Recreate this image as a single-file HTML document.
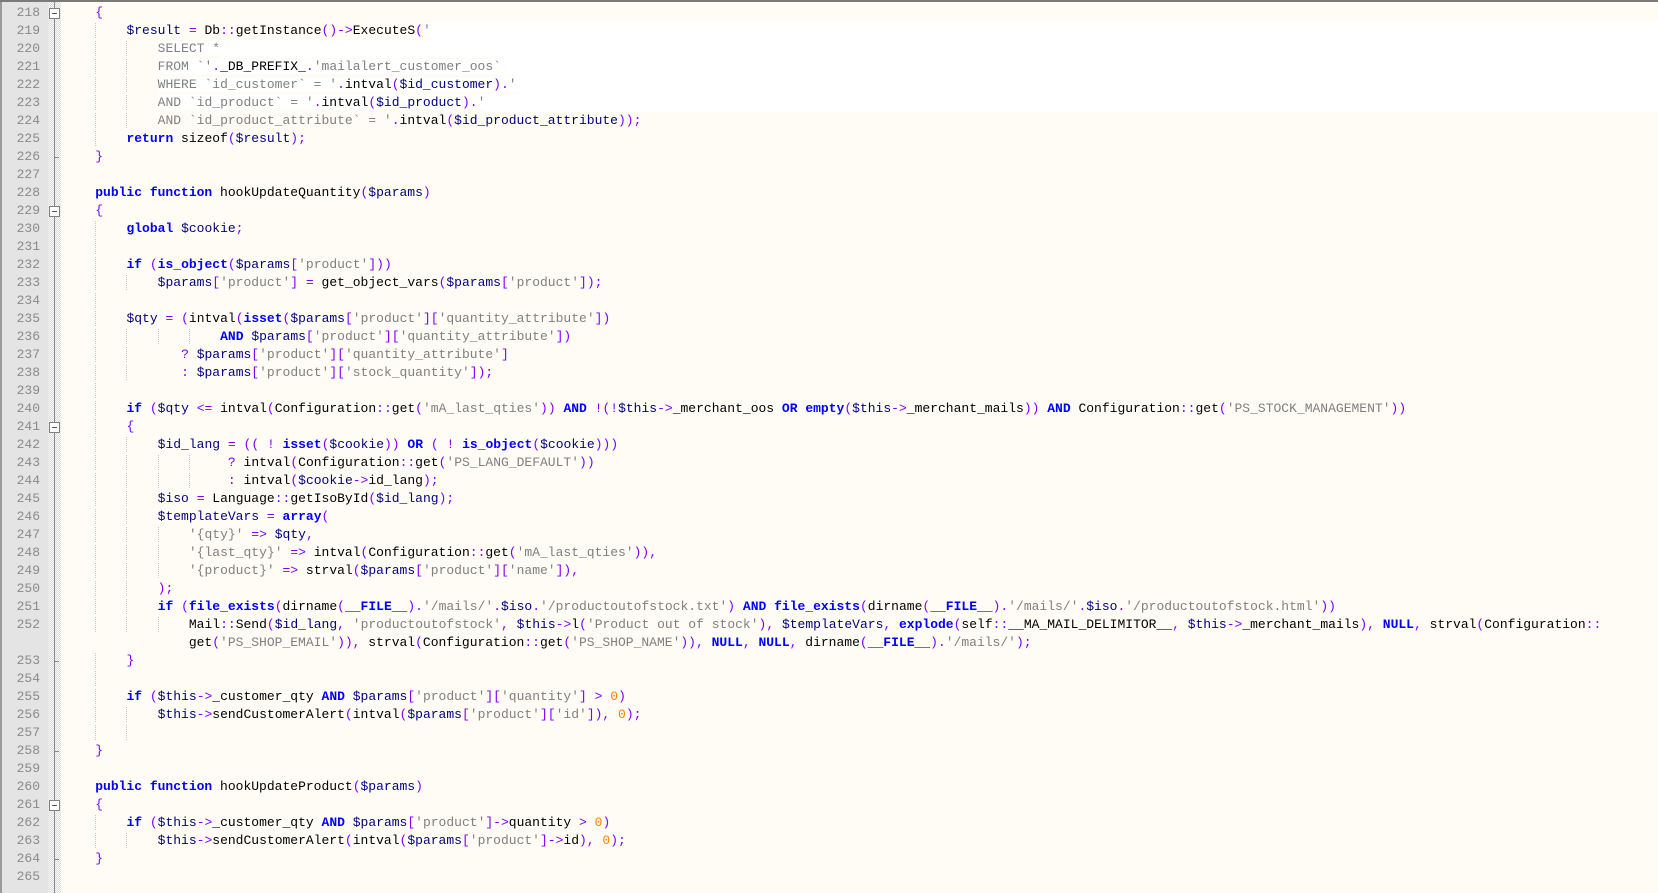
<!DOCTYPE html>
<html><head><meta charset="utf-8"><style>
html,body{margin:0;padding:0;width:1658px;height:891px;overflow:hidden;background:#fefcf4}
#ed{position:absolute;left:0;top:0;width:1658px;height:891px;background:#fefcf4;border-top:2px solid #7a7a7a;box-sizing:border-box}
#gut{position:absolute;left:0;top:0;width:48px;height:891px;background:#e4e4e4;border-left:2px solid #9a9a9a;box-sizing:border-box}
#fold{position:absolute;left:48px;top:0;width:13px;height:891px;background:repeating-conic-gradient(#dcdcdc 0 25%,#f8f8f8 0 50%) 0 0/2px 2px}
#fline{position:absolute;left:54px;top:0;width:1px;height:891px;background:#8a8a8a}
.box{position:absolute;left:49px;width:9px;height:9px;border:1px solid #808080;background:#fff;box-sizing:content-box}
.box:after{content:"";position:absolute;left:2px;top:4px;width:5px;height:1px;background:#555}
.tick{position:absolute;left:54px;width:5px;height:1px;background:#8a8a8a}
#rows{position:absolute;left:0;top:2px;width:1658px}
.r{position:relative;height:18px;white-space:pre;font:13px/18px "Liberation Mono",monospace;color:#000;overflow:hidden}
.ln{position:absolute;left:0;width:40px;text-align:right;color:#8a8a8a;font-size:13px}
.c{position:absolute;left:64px;top:0}
.k{color:#0000ff;font-weight:bold}
.v{color:#000080}
.o{color:#8000ff}
.s{color:#808080}
.n{color:#ff8000}
i{font-style:normal;background:repeating-linear-gradient(to bottom,#c8c8c8 0 1px,transparent 1px 2px) 0 0/1px 100% no-repeat}
.w{background:#fff}
.eol{display:inline-block;width:1700px;height:18px;background:#fff;vertical-align:top}
</style></head><body>
<div id="ed">
<div id="gut"></div>
<div id="fold"></div>
<div id="fline"></div>
<div class="box" style="top:6px"></div>
<div class="tick" style="top:155px"></div>
<div class="box" style="top:204px"></div>
<div class="box" style="top:420px"></div>
<div class="tick" style="top:659px"></div>
<div class="tick" style="top:749px"></div>
<div class="box" style="top:798px"></div>
<div class="tick" style="top:857px"></div>
<div id="rows">
<div class="r"><span class="ln">218</span><span class="c">    <span class="o">{</span></span></div>
<div class="r"><span class="ln">219</span><span class="c">    <i>    </i><span class="v">$result</span> <span class="o">=</span> Db<span class="o">::</span>getInstance<span class="o">()-&gt;</span>ExecuteS<span class="o">(</span><span class="s w">'</span><span class="eol"></span></span></div>
<div class="r"><span class="ln">220</span><span class="c">    <i>    </i><i>    </i><span class="s w">SELECT *</span><span class="eol"></span></span></div>
<div class="r"><span class="ln">221</span><span class="c">    <i>    </i><i>    </i><span class="s w">FROM `'</span><span class="o w">.</span><span class="w">_DB_PREFIX_</span><span class="o w">.</span><span class="s w">'mailalert_customer_oos`</span><span class="eol"></span></span></div>
<div class="r"><span class="ln">222</span><span class="c">    <i>    </i><i>    </i><span class="s w">WHERE `id_customer` = '</span><span class="o w">.</span><span class="w">intval</span><span class="o w">(</span><span class="v w">$id_customer</span><span class="o w">).</span><span class="s w">'</span><span class="eol"></span></span></div>
<div class="r"><span class="ln">223</span><span class="c">    <i>    </i><i>    </i><span class="s w">AND `id_product` = '</span><span class="o w">.</span><span class="w">intval</span><span class="o w">(</span><span class="v w">$id_product</span><span class="o w">).</span><span class="s w">'</span><span class="eol"></span></span></div>
<div class="r"><span class="ln">224</span><span class="c">    <i>    </i><i>    </i><span class="s">AND `id_product_attribute` = '</span><span class="o">.</span>intval<span class="o">(</span><span class="v">$id_product_attribute</span><span class="o">));</span></span></div>
<div class="r"><span class="ln">225</span><span class="c">    <i>    </i><span class="k">return</span> sizeof<span class="o">(</span><span class="v">$result</span><span class="o">);</span></span></div>
<div class="r"><span class="ln">226</span><span class="c">    <span class="o">}</span></span></div>
<div class="r"><span class="ln">227</span><span class="c"></span></div>
<div class="r"><span class="ln">228</span><span class="c">    <span class="k">public function</span> hookUpdateQuantity<span class="o">(</span><span class="v">$params</span><span class="o">)</span></span></div>
<div class="r"><span class="ln">229</span><span class="c">    <span class="o">{</span></span></div>
<div class="r"><span class="ln">230</span><span class="c">    <i>    </i><span class="k">global</span> <span class="v">$cookie</span><span class="o">;</span></span></div>
<div class="r"><span class="ln">231</span><span class="c">    <i>    </i></span></div>
<div class="r"><span class="ln">232</span><span class="c">    <i>    </i><span class="k">if</span> <span class="o">(</span><span class="k">is_object</span><span class="o">(</span><span class="v">$params</span><span class="o">[</span><span class="s">'product'</span><span class="o">]))</span></span></div>
<div class="r"><span class="ln">233</span><span class="c">    <i>    </i><i>    </i><span class="v">$params</span><span class="o">[</span><span class="s">'product'</span><span class="o">]</span> <span class="o">=</span> get_object_vars<span class="o">(</span><span class="v">$params</span><span class="o">[</span><span class="s">'product'</span><span class="o">]);</span></span></div>
<div class="r"><span class="ln">234</span><span class="c">    <i>    </i></span></div>
<div class="r"><span class="ln">235</span><span class="c">    <i>    </i><span class="v">$qty</span> <span class="o">=</span> <span class="o">(</span>intval<span class="o">(</span><span class="k">isset</span><span class="o">(</span><span class="v">$params</span><span class="o">[</span><span class="s">'product'</span><span class="o">][</span><span class="s">'quantity_attribute'</span><span class="o">])</span></span></div>
<div class="r"><span class="ln">236</span><span class="c">    <i>    </i><i>    </i><i>    </i><i>    </i><span class="k">AND</span> <span class="v">$params</span><span class="o">[</span><span class="s">'product'</span><span class="o">][</span><span class="s">'quantity_attribute'</span><span class="o">])</span></span></div>
<div class="r"><span class="ln">237</span><span class="c">    <i>    </i><i>    </i>   <span class="o">?</span> <span class="v">$params</span><span class="o">[</span><span class="s">'product'</span><span class="o">][</span><span class="s">'quantity_attribute'</span><span class="o">]</span></span></div>
<div class="r"><span class="ln">238</span><span class="c">    <i>    </i><i>    </i>   <span class="o">:</span> <span class="v">$params</span><span class="o">[</span><span class="s">'product'</span><span class="o">][</span><span class="s">'stock_quantity'</span><span class="o">]);</span></span></div>
<div class="r"><span class="ln">239</span><span class="c">    <i>    </i></span></div>
<div class="r"><span class="ln">240</span><span class="c">    <i>    </i><span class="k">if</span> <span class="o">(</span><span class="v">$qty</span> <span class="o">&lt;=</span> intval<span class="o">(</span>Configuration<span class="o">::</span>get<span class="o">(</span><span class="s">'mA_last_qties'</span><span class="o">))</span> <span class="k">AND</span> <span class="o">!(!</span><span class="v">$this</span><span class="o">-&gt;</span>_merchant_oos <span class="k">OR</span> <span class="k">empty</span><span class="o">(</span><span class="v">$this</span><span class="o">-&gt;</span>_merchant_mails<span class="o">))</span> <span class="k">AND</span> Configuration<span class="o">::</span>get<span class="o">(</span><span class="s">'PS_STOCK_MANAGEMENT'</span><span class="o">))</span></span></div>
<div class="r"><span class="ln">241</span><span class="c">    <i>    </i><span class="o">{</span></span></div>
<div class="r"><span class="ln">242</span><span class="c">    <i>    </i><i>    </i><span class="v">$id_lang</span> <span class="o">=</span> <span class="o">((</span> <span class="o">!</span> <span class="k">isset</span><span class="o">(</span><span class="v">$cookie</span><span class="o">))</span> <span class="k">OR</span> <span class="o">(</span> <span class="o">!</span> <span class="k">is_object</span><span class="o">(</span><span class="v">$cookie</span><span class="o">)))</span></span></div>
<div class="r"><span class="ln">243</span><span class="c">    <i>    </i><i>    </i><i>    </i><i>    </i> <span class="o">?</span> intval<span class="o">(</span>Configuration<span class="o">::</span>get<span class="o">(</span><span class="s">'PS_LANG_DEFAULT'</span><span class="o">))</span></span></div>
<div class="r"><span class="ln">244</span><span class="c">    <i>    </i><i>    </i><i>    </i><i>    </i> <span class="o">:</span> intval<span class="o">(</span><span class="v">$cookie</span><span class="o">-&gt;</span>id_lang<span class="o">);</span></span></div>
<div class="r"><span class="ln">245</span><span class="c">    <i>    </i><i>    </i><span class="v">$iso</span> <span class="o">=</span> Language<span class="o">::</span>getIsoById<span class="o">(</span><span class="v">$id_lang</span><span class="o">);</span></span></div>
<div class="r"><span class="ln">246</span><span class="c">    <i>    </i><i>    </i><span class="v">$templateVars</span> <span class="o">=</span> <span class="k">array</span><span class="o">(</span></span></div>
<div class="r"><span class="ln">247</span><span class="c">    <i>    </i><i>    </i><i>    </i><span class="s">'{qty}'</span> <span class="o">=&gt;</span> <span class="v">$qty</span><span class="o">,</span></span></div>
<div class="r"><span class="ln">248</span><span class="c">    <i>    </i><i>    </i><i>    </i><span class="s">'{last_qty}'</span> <span class="o">=&gt;</span> intval<span class="o">(</span>Configuration<span class="o">::</span>get<span class="o">(</span><span class="s">'mA_last_qties'</span><span class="o">)),</span></span></div>
<div class="r"><span class="ln">249</span><span class="c">    <i>    </i><i>    </i><i>    </i><span class="s">'{product}'</span> <span class="o">=&gt;</span> strval<span class="o">(</span><span class="v">$params</span><span class="o">[</span><span class="s">'product'</span><span class="o">][</span><span class="s">'name'</span><span class="o">]),</span></span></div>
<div class="r"><span class="ln">250</span><span class="c">    <i>    </i><i>    </i><span class="o">);</span></span></div>
<div class="r"><span class="ln">251</span><span class="c">    <i>    </i><i>    </i><span class="k">if</span> <span class="o">(</span><span class="k">file_exists</span><span class="o">(</span>dirname<span class="o">(</span><span class="k">__FILE__</span><span class="o">).</span><span class="s">'/mails/'</span><span class="o">.</span><span class="v">$iso</span><span class="o">.</span><span class="s">'/productoutofstock.txt'</span><span class="o">)</span> <span class="k">AND</span> <span class="k">file_exists</span><span class="o">(</span>dirname<span class="o">(</span><span class="k">__FILE__</span><span class="o">).</span><span class="s">'/mails/'</span><span class="o">.</span><span class="v">$iso</span><span class="o">.</span><span class="s">'/productoutofstock.html'</span><span class="o">))</span></span></div>
<div class="r"><span class="ln">252</span><span class="c">    <i>    </i><i>    </i><i>    </i>Mail<span class="o">::</span>Send<span class="o">(</span><span class="v">$id_lang</span><span class="o">,</span> <span class="s">'productoutofstock'</span><span class="o">,</span> <span class="v">$this</span><span class="o">-&gt;</span>l<span class="o">(</span><span class="s">'Product out of stock'</span><span class="o">),</span> <span class="v">$templateVars</span><span class="o">,</span> <span class="k">explode</span><span class="o">(</span>self<span class="o">::</span>__MA_MAIL_DELIMITOR__<span class="o">,</span> <span class="v">$this</span><span class="o">-&gt;</span>_merchant_mails<span class="o">),</span> <span class="k">NULL</span><span class="o">,</span> strval<span class="o">(</span>Configuration<span class="o">::</span></span></div>
<div class="r"><span class="ln"></span><span class="c">                get<span class="o">(</span><span class="s">'PS_SHOP_EMAIL'</span><span class="o">)),</span> strval<span class="o">(</span>Configuration<span class="o">::</span>get<span class="o">(</span><span class="s">'PS_SHOP_NAME'</span><span class="o">)),</span> <span class="k">NULL</span><span class="o">,</span> <span class="k">NULL</span><span class="o">,</span> dirname<span class="o">(</span><span class="k">__FILE__</span><span class="o">).</span><span class="s">'/mails/'</span><span class="o">);</span></span></div>
<div class="r"><span class="ln">253</span><span class="c">    <i>    </i><span class="o">}</span></span></div>
<div class="r"><span class="ln">254</span><span class="c">    <i>    </i></span></div>
<div class="r"><span class="ln">255</span><span class="c">    <i>    </i><span class="k">if</span> <span class="o">(</span><span class="v">$this</span><span class="o">-&gt;</span>_customer_qty <span class="k">AND</span> <span class="v">$params</span><span class="o">[</span><span class="s">'product'</span><span class="o">][</span><span class="s">'quantity'</span><span class="o">]</span> <span class="o">&gt;</span> <span class="n">0</span><span class="o">)</span></span></div>
<div class="r"><span class="ln">256</span><span class="c">    <i>    </i><i>    </i><span class="v">$this</span><span class="o">-&gt;</span>sendCustomerAlert<span class="o">(</span>intval<span class="o">(</span><span class="v">$params</span><span class="o">[</span><span class="s">'product'</span><span class="o">][</span><span class="s">'id'</span><span class="o">]),</span> <span class="n">0</span><span class="o">);</span></span></div>
<div class="r"><span class="ln">257</span><span class="c">    <i>    </i><i>    </i></span></div>
<div class="r"><span class="ln">258</span><span class="c">    <span class="o">}</span></span></div>
<div class="r"><span class="ln">259</span><span class="c"></span></div>
<div class="r"><span class="ln">260</span><span class="c">    <span class="k">public function</span> hookUpdateProduct<span class="o">(</span><span class="v">$params</span><span class="o">)</span></span></div>
<div class="r"><span class="ln">261</span><span class="c">    <span class="o">{</span></span></div>
<div class="r"><span class="ln">262</span><span class="c">    <i>    </i><span class="k">if</span> <span class="o">(</span><span class="v">$this</span><span class="o">-&gt;</span>_customer_qty <span class="k">AND</span> <span class="v">$params</span><span class="o">[</span><span class="s">'product'</span><span class="o">]-&gt;</span>quantity <span class="o">&gt;</span> <span class="n">0</span><span class="o">)</span></span></div>
<div class="r"><span class="ln">263</span><span class="c">    <i>    </i><i>    </i><span class="v">$this</span><span class="o">-&gt;</span>sendCustomerAlert<span class="o">(</span>intval<span class="o">(</span><span class="v">$params</span><span class="o">[</span><span class="s">'product'</span><span class="o">]-&gt;</span>id<span class="o">),</span> <span class="n">0</span><span class="o">);</span></span></div>
<div class="r"><span class="ln">264</span><span class="c">    <span class="o">}</span></span></div>
<div class="r"><span class="ln">265</span><span class="c"></span></div>
</div>
</div>
</body></html>
